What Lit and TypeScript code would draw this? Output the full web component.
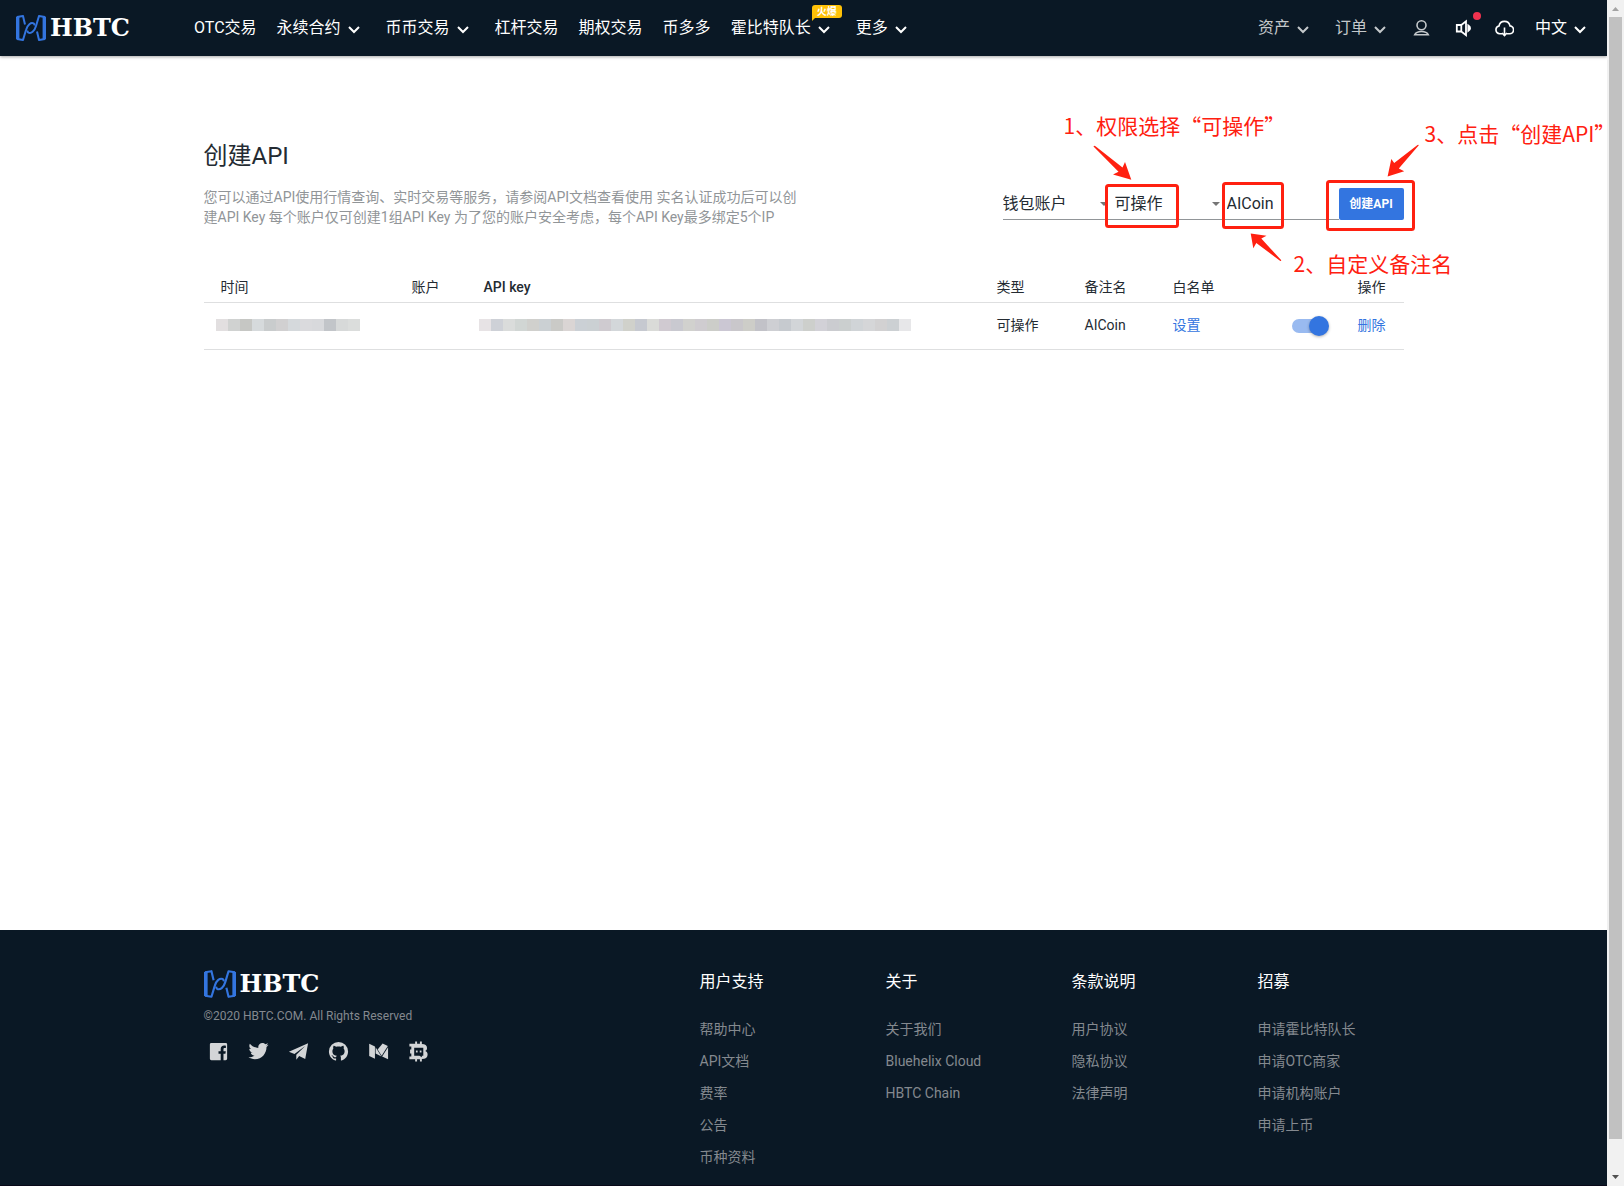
import { LitElement, html, css, svg, nothing } from "lit";
import { customElement, property, state } from "lit/decorators.js";

const FONT = css`Roboto, "Noto Sans CJK SC", "Liberation Sans", sans-serif`;

interface NavItem {
  label: string;
  menu?: boolean;
  badge?: string;
}

const NAV: NavItem[] = [
  { label: "OTC交易" },
  { label: "永续合约", menu: true },
  { label: "币币交易", menu: true },
  { label: "杠杆交易" },
  { label: "期权交易" },
  { label: "币多多" },
  { label: "霍比特队长", menu: true, badge: "火爆" },
  { label: "更多", menu: true },
];

const FOOTER_COLUMNS = [
  { title: "用户支持", links: ["帮助中心", "API文档", "费率", "公告", "币种资料"] },
  { title: "关于", links: ["关于我们", "Bluehelix Cloud", "HBTC Chain"] },
  { title: "条款说明", links: ["用户协议", "隐私协议", "法律声明"] },
  { title: "招募", links: ["申请霍比特队长", "申请OTC商家", "申请机构账户", "申请上币"] },
];

const TIME_BLOCKS =
  "e2dfe0 d0d2d1 c6c7c4 d6dadc c9cccd d1d0d1 d5d9dc dadadd d8d9dc c2c5c9 d7d9d9 dbdddc".split(" ");
const KEY_BLOCKS = (
  "e7e3e5 ced1d7 dadcdb d1d6d4 d0d0cd cbd0d3 cacac7 dad5d4 cbd0d5 cbd0d3 cfcbd0 d3d7da " +
  "d0d1cb c6c9d0 dadbd8 d0cad1 c9c9d0 d1d1ce cfccd0 cccdc9 cbc7d3 c9c7cb cdcdc8 c2c2c8 " +
  "cecfd3 c6cacf d2d5d8 cdcfcc d2d1d7 cbccd0 cbcfcf d0d4d7 d5d6d8 d2d1d2 ccd0d3 e7e7e9"
).split(" ");

const SOCIAL = [
  {
    name: "Facebook",
    shape: svg`<path d="M4.500 3h15A1.500 1.500 0 0 1 21 4.500v15a1.500 1.500 0 0 1-1.500 1.500H17.200v-6.600h2l.4-2.700h-2.400V9.700c0-.9.3-1.400 1.400-1.400h1.100V5.900c-.5-.1-1.100-.1-1.800-.1-2.200 0-3.600 1.300-3.600 3.600v2.300H12v2.700h2.300V21H4.500A1.500 1.500 0 0 1 3 19.500v-15A1.500 1.500 0 0 1 4.500 3z"/>`,
  },
  {
    name: "Twitter",
    shape: svg`<path d="M22.46,6C21.69,6.35 20.86,6.58 20,6.69C20.88,6.16 21.56,5.32 21.88,4.31C21.05,4.81 20.13,5.16 19.16,5.36C18.37,4.5 17.26,4 16,4C13.65,4 11.73,5.92 11.73,8.29C11.73,8.63 11.77,8.96 11.84,9.27C8.28,9.09 5.11,7.38 3,4.79C2.63,5.42 2.42,6.16 2.42,6.94C2.42,8.43 3.17,9.75 4.33,10.5C3.62,10.5 2.96,10.3 2.38,10V10.03C2.38,12.11 3.86,13.85 5.82,14.24C5.46,14.34 5.08,14.39 4.69,14.39C4.42,14.39 4.15,14.36 3.89,14.31C4.43,16 6,17.26 7.89,17.29C6.43,18.45 4.58,19.13 2.56,19.13C2.22,19.13 1.88,19.11 1.54,19.07C3.44,20.29 5.7,21 8.12,21C16,21 20.33,14.46 20.33,8.79C20.33,8.6 20.33,8.42 20.32,8.23C21.16,7.63 21.88,6.87 22.46,6Z" transform="translate(0 -1)"/>`,
  },
  {
    name: "Telegram",
    shape: svg`<path d="M22 3.500L2 12.300l5.800 2.200L19 6.200l-9.300 9.200v5.300l3-3.900 6.300 2.900z"/>`,
  },
  {
    name: "GitHub",
    shape: svg`<path d="M12,2A10,10 0 0,0 2,12C2,16.42 4.87,20.17 8.84,21.5C9.34,21.58 9.5,21.27 9.5,21C9.5,20.77 9.5,20.14 9.5,19.31C6.73,19.91 6.14,17.97 6.14,17.97C5.68,16.81 5.03,16.5 5.03,16.5C4.12,15.88 5.1,15.9 5.1,15.9C6.1,15.97 6.63,16.93 6.63,16.93C7.5,18.45 8.97,18 9.54,17.76C9.63,17.11 9.89,16.67 10.17,16.42C7.95,16.17 5.62,15.31 5.62,11.5C5.62,10.39 6,9.5 6.65,8.79C6.55,8.54 6.2,7.5 6.75,6.15C6.75,6.15 7.59,5.88 9.5,7.17C10.29,6.95 11.15,6.84 12,6.84C12.85,6.84 13.71,6.95 14.5,7.17C16.41,5.88 17.25,6.15 17.25,6.15C17.8,7.5 17.45,8.54 17.35,8.79C18,9.5 18.38,10.39 18.38,11.5C18.38,15.32 16.04,16.16 13.81,16.41C14.17,16.72 14.5,17.33 14.5,18.26C14.5,19.6 14.5,20.68 14.5,21C14.5,21.27 14.66,21.59 15.17,21.5C19.14,20.16 22,16.42 22,12A10,10 0 0,0 12,2Z"/>`,
  },
  {
    name: "Medium",
    shape: svg`<path d="M2.300 3.800l6 3v12.800l-6-3z"/><path d="M9 7.600l6 9.600-6-3z"/><path d="M16.300 3.600l5.400 2.700-6.400 10.200-4.200-6.700z"/><path d="M22 7.600v12.600l-6.200-3z"/>`,
  },
  {
    name: "BiHu",
    shape: svg`<path fill-rule="evenodd" d="M8.500 1.500h2v2.500h3V1.500h2v2.700c3.400.1 5.400 1.500 5.400 4.200 0 1.600-.7 2.700-1.900 3.200 1.600.6 2.500 1.800 2.500 3.700 0 2.900-2.200 4.400-6 4.500v2.700h-2v-2.500h-3v2.500h-2v-2.500H2.500v-2.800h2V14H3.200v-4h1.300V6.800h-2V4h6zM7.500 8v8.500h5.500l2.500 1.500v-1.500H17V8z"/><rect x="9.300" y="11" width="1.800" height="2"/><rect x="13.300" y="11" width="1.800" height="2"/>`,
  },
];

@customElement("hbtc-logo")
export class HbtcLogo extends LitElement {
  static styles = css`
    :host {
      display: flex;
      align-items: center;
      gap: 4px;
      color: #fff;
    }
    .mark {
      flex: none;
      width: 30px;
      height: 26px;
    }
    .word {
      font: bold 24px/28px "DejaVu Serif", serif;
    }
    :host([large]) .mark {
      width: 32px;
      height: 28px;
    }
  `;

  render() {
    return html`
      <svg class="mark" viewBox="0 0 30 26" aria-hidden="true">
        <g fill="none" stroke="#3375e0" stroke-width="2" stroke-linejoin="round">
          <path d="M1 24L7 25L10 15C11.500 9.500 15 7.200 17.600 8.400Q18.600 9 18.400 10.500" />
          <path d="M29 2L23 1L20 11C18.500 16.500 15 18.800 12.400 17.600Q11.400 17 11.600 15.500" />
          <path d="M1 2L7 1L9 9.500" />
          <path d="M29 24L23 25L21 16.500" />
        </g>
        <path fill="#3375e0" d="M0 1.800L3.400 1V25L0 24.200zM30 1.800L26.600 1V25L30 24.200z" />
      </svg>
      <span class="word">HBTC</span>
    `;
  }
}

@customElement("site-header")
export class SiteHeader extends LitElement {
  static styles = css`
    :host {
      display: block;
      font-family: ${FONT};
    }
    .bar {
      display: flex;
      align-items: center;
      height: 56px;
      padding: 0 5px 0 16px;
      background: #0a1825;
      box-shadow: 0 1px 3px rgba(0, 0, 0, 0.35);
    }
    .home {
      flex: none;
      width: 168px;
      text-decoration: none;
    }
    .menu,
    .tools {
      display: flex;
      align-items: center;
    }
    .tools {
      margin-left: auto;
    }
    .item {
      position: relative;
      display: flex;
      align-items: center;
      padding: 0 10px;
      color: #fff;
      font-size: 16px;
      line-height: 24px;
      white-space: nowrap;
      text-decoration: none;
    }
    .dim {
      color: #c4c8cb;
    }
    .chevron {
      width: 24px;
      height: 24px;
      margin-left: 1px;
      flex: none;
    }
    .badge {
      position: absolute;
      top: -11px;
      right: 4px;
      width: 30px;
      border-radius: 3px 3px 3px 0;
      background: #ffc107;
      font-size: 10px;
      font-weight: 700;
      line-height: 13px;
      text-align: center;
    }
    .badge::after {
      content: "";
      position: absolute;
      left: 0;
      top: 100%;
      border-top: 3px solid #ffc107;
      border-right: 3px solid transparent;
    }
    .icons {
      display: flex;
    }
    .icon {
      position: relative;
      display: flex;
      justify-content: center;
      width: 41px;
      padding: 0;
      border: 0;
      background: none;
      color: #fff;
    }
    .icon.dim {
      color: #c4c8cb;
    }
    .glyph {
      width: 20px;
      height: 20px;
    }
    .dot {
      position: absolute;
      top: -6px;
      left: 30px;
      width: 8px;
      height: 8px;
      border-radius: 50%;
      background: #f0324f;
    }
  `;

  private chevron() {
    return html`<svg class="chevron" viewBox="0 0 24 24" aria-hidden="true">
      <path d="M7 11l5 5 5-5" fill="none" stroke="currentColor" stroke-width="2" />
    </svg>`;
  }

  private item(item: NavItem, dim = false) {
    return html`<a class="item ${dim ? "dim" : ""}" href="#">
      <span>${item.label}</span>${item.menu ? this.chevron() : nothing}
      ${item.badge ? html`<span class="badge">${item.badge}</span>` : nothing}
    </a>`;
  }

  render() {
    return html`
      <header class="bar">
        <a class="home" href="#" aria-label="HBTC"><hbtc-logo></hbtc-logo></a>
        <nav class="menu">${NAV.map((n) => this.item(n))}</nav>
        <div class="tools">
          ${this.item({ label: "资产", menu: true }, true)}
          ${this.item({ label: "订单", menu: true }, true)}
          <div class="icons">
            <button class="icon dim" aria-label="个人中心">
              <svg class="glyph" viewBox="0 0 20 20" fill="none" stroke="currentColor" stroke-width="1.600">
                <circle cx="9.500" cy="7.200" r="4.500" />
                <path d="M2.700 16.800c1.200-2.600 3.400-3.300 6.800-3.300s5.600.7 6.800 3.300z" />
              </svg>
            </button>
            <button class="icon" aria-label="公告">
              <svg class="glyph" viewBox="0 0 20 20" fill="none" stroke="currentColor" stroke-width="1.800">
                <path d="M3.800 7h4.500v6.500H3.800zM8.300 7L13 3.300v13.900l-4.700-3.700" />
                <path d="M15.300 7.600q3.600 2.600 0 5.300z" />
              </svg>
              <span class="dot"></span>
            </button>
            <button class="icon" aria-label="下载">
              <svg class="glyph" viewBox="0 0 20 20" fill="none" stroke="currentColor" stroke-width="1.600">
                <path d="M8 15.700H5.700A3.900 3.900 0 0 1 5 8a5.600 5.600 0 0 1 11-.1 3.900 3.900 0 0 1-.7 7.800H13" />
                <path d="M10.500 9.500v8M8 15l2.500 2.600L13 15" />
              </svg>
            </button>
          </div>
          ${this.item({ label: "中文", menu: true })}
        </div>
      </header>
    `;
  }
}

@customElement("mosaic-strip")
export class MosaicStrip extends LitElement {
  @property({ attribute: false }) blocks: string[] = [];

  static styles = css`
    :host {
      display: flex;
      height: 12px;
    }
    .block {
      flex: none;
      width: 12px;
    }
  `;

  render() {
    return this.blocks.map((c) => html`<span class="block" style="background:#${c}"></span>`);
  }
}

@customElement("api-panel")
export class ApiPanel extends LitElement {
  @state() private enabled = true;

  static styles = css`
    :host {
      display: block;
      font-family: ${FONT};
      color: #242b32;
    }
    .panel {
      position: relative;
      max-width: 1200px;
      margin: 0 auto;
      padding-top: 84px;
    }
    .top {
      display: flex;
      align-items: flex-end;
      justify-content: space-between;
      margin-bottom: 45px;
    }
    .intro {
      flex: 0 1 600px;
    }
    .title {
      margin: 0 0 15px;
      font-size: 24px;
      font-weight: 400;
      line-height: 32px;
    }
    .desc {
      margin: 0;
      color: #919598;
      font-size: 14px;
      line-height: 20px;
    }
    .form {
      display: flex;
      flex: none;
      margin-bottom: 7px;
    }
    .field {
      display: grid;
      align-items: center;
      width: 112px;
      height: 32px;
      box-sizing: border-box;
      border-bottom: 1px solid #919598;
    }
    .control {
      grid-area: 1 / 1;
      width: 100%;
      height: 30px;
      margin: 0;
      padding: 0;
      border: 0;
      outline: 0;
      appearance: none;
      background: none;
      color: inherit;
      font: 16px/30px ${FONT};
    }
    .caret {
      grid-area: 1 / 1;
      justify-self: end;
      width: 8px;
      height: 4px;
      margin-right: 7px;
      pointer-events: none;
    }
    .create {
      width: 65px;
      height: 32px;
      padding: 0;
      border: 0;
      border-radius: 2px;
      background: #3375e0;
      color: #fff;
      font: 700 12px/32px ${FONT};
    }
    .table {
      width: 100%;
      border-collapse: separate;
      border-spacing: 0;
      table-layout: fixed;
      font-size: 14px;
      line-height: 20px;
      text-align: left;
    }
    .time { width: 191px; }
    .account { width: 72px; }
    .key { width: 513px; }
    .kind { width: 88px; }
    .white { width: 119px; }
    .switch { width: 66px; }
    .action { width: 63px; }
    .th {
      box-sizing: border-box;
      padding: 5px 0 5px 17px;
      border-bottom: 1px solid #dedfe0;
      font-weight: 400;
      white-space: nowrap;
    }
    .th.key {
      font-weight: 500;
    }
    .td {
      padding: 12px 0 14px 17px;
      border-bottom: 1px solid #dedfe0;
      white-space: nowrap;
    }
    .td.masked {
      padding-left: 12px;
    }
    .link {
      color: #3375e0;
      text-decoration: none;
    }
    .toggle {
      display: flex;
      align-items: center;
      justify-content: flex-end;
      width: 34px;
      height: 14px;
      margin: 2px 0 0;
      border-radius: 7px;
      appearance: none;
      background: #99baf0;
    }
    .toggle::after {
      content: "";
      flex: none;
      width: 20px;
      height: 20px;
      margin-right: -3px;
      border-radius: 50%;
      background: #3375e0;
      box-shadow: 0 1px 3px rgba(0, 0, 0, 0.3);
    }
    .toggle:not(:checked) {
      justify-content: flex-start;
      background: #b5b9bd;
    }
    .notes {
      position: absolute;
      top: 0;
      right: 0;
      width: 360px;
      height: 240px;
      pointer-events: none;
      color: #ff2010;
      font: 21px/28px "Noto Sans CJK SC", sans-serif;
    }
    .marks {
      display: block;
      width: 360px;
      height: 240px;
      overflow: visible;
    }
    .note {
      position: absolute;
      white-space: nowrap;
    }
    .one {
      left: 20px;
      top: 55px;
    }
    .two {
      left: 250px;
      top: 193px;
    }
    .three {
      left: 381px;
      top: 63px;
    }
  `;

  private caret() {
    return html`<svg class="caret" viewBox="0 0 10 5" aria-hidden="true">
      <path d="M0 0h10L5 5z" fill="#757575" />
    </svg>`;
  }

  render() {
    return html`
      <main class="panel">
        <section class="top">
          <div class="intro">
            <h1 class="title">创建API</h1>
            <p class="desc">
              您可以通过API使用行情查询、实时交易等服务，请参阅API文档查看使用 实名认证成功后可以创建API Key
              每个账户仅可创建1组API Key 为了您的账户安全考虑，每个API Key最多绑定5个IP
            </p>
          </div>
          <form class="form" @submit=${(e: Event) => e.preventDefault()}>
            <label class="field">
              <select class="control" aria-label="账户">
                <option>钱包账户</option>
              </select>
              ${this.caret()}
            </label>
            <label class="field">
              <select class="control" aria-label="类型">
                <option>可操作</option>
              </select>
              ${this.caret()}
            </label>
            <label class="field">
              <input class="control" type="text" aria-label="备注名" value="AICoin" />
            </label>
            <button class="create" type="submit">创建API</button>
          </form>
        </section>

        <table class="table">
          <thead>
            <tr>
              <th class="th time">时间</th>
              <th class="th account">账户</th>
              <th class="th key">API key</th>
              <th class="th kind">类型</th>
              <th class="th kind">备注名</th>
              <th class="th white">白名单</th>
              <th class="th switch"></th>
              <th class="th action">操作</th>
            </tr>
          </thead>
          <tbody>
            <tr>
              <td class="td masked"><mosaic-strip .blocks=${TIME_BLOCKS}></mosaic-strip></td>
              <td class="td"></td>
              <td class="td masked"><mosaic-strip .blocks=${KEY_BLOCKS}></mosaic-strip></td>
              <td class="td">可操作</td>
              <td class="td">AICoin</td>
              <td class="td"><a class="link" href="#">设置</a></td>
              <td class="td">
                <input
                  class="toggle"
                  type="checkbox"
                  aria-label="启用"
                  .checked=${this.enabled}
                  @change=${() => (this.enabled = !this.enabled)}
                />
              </td>
              <td class="td"><a class="link" href="#">删除</a></td>
            </tr>
          </tbody>
        </table>

        <div class="notes">
          <svg class="marks" viewBox="1044 56 360 240" aria-hidden="true">
            <g fill="none" stroke="#ff2010" stroke-width="3">
              <rect x="1106.500" y="185.500" width="71" height="41" rx="2" />
              <rect x="1223.500" y="183.500" width="59" height="44" rx="2" />
              <rect x="1327.500" y="181.500" width="86" height="48" rx="2" />
            </g>
            <g fill="#ff2010">
              <path d="M1093.500 146.500Q1094 145.300 1095.500 146.200L1122.500 167.500 1125 162 1131.300 179.800 1113 174.400 1118.500 171.800z" />
              <path d="M1250.700 233.600L1266.500 235.700 1261.300 238.500 1281.300 260.300Q1281 261.500 1280 260.800L1256.300 243 1253.300 248.200z" />
              <path d="M1418.800 145.200Q1418.500 144.400 1417.500 145L1394.200 163 1391.300 159 1387.600 176.500 1404.200 171.200 1398.800 168.600z" />
            </g>
          </svg>
          <span class="note one">1、权限选择“可操作”</span>
          <span class="note two">2、自定义备注名</span>
          <span class="note three">3、点击“创建API”</span>
        </div>
      </main>
    `;
  }
}

@customElement("site-footer")
export class SiteFooter extends LitElement {
  static styles = css`
    :host {
      display: block;
      background: #0a1825;
      border-bottom: 1px solid #080818;
      font-family: ${FONT};
      color: #84898f;
    }
    .inner {
      display: flex;
      justify-content: space-between;
      max-width: 1200px;
      margin: 0 auto;
      padding: 40px 0 12px;
    }
    .copy {
      margin: 8px 0 14px;
      font-size: 12px;
      line-height: 20px;
    }
    .social {
      display: flex;
      margin-left: -5px;
    }
    .badge {
      display: flex;
      justify-content: center;
      width: 40px;
      color: #d3d5d7;
    }
    .glyph {
      width: 23px;
      height: 23px;
    }
    .columns {
      display: grid;
      grid-template-columns: repeat(4, 186px);
      margin-right: -40px;
    }
    .heading {
      margin: 0 0 19px;
      color: #fff;
      font-size: 16px;
      font-weight: 400;
      line-height: 24px;
    }
    .links {
      margin: 0;
      padding: 0;
      list-style: none;
      font-size: 14px;
      line-height: 32px;
    }
    .link {
      color: inherit;
      text-decoration: none;
    }
  `;

  render() {
    return html`
      <footer class="inner">
        <div>
          <hbtc-logo large></hbtc-logo>
          <p class="copy">©2020 HBTC.COM. All Rights Reserved</p>
          <div class="social">
            ${SOCIAL.map(
              (s) => html`<a class="badge" href="#" aria-label=${s.name}>
                <svg class="glyph" viewBox="0 0 24 24" fill="currentColor" aria-hidden="true">${s.shape}</svg>
              </a>`,
            )}
          </div>
        </div>
        <nav class="columns">
          ${FOOTER_COLUMNS.map(
            (col) => html`<section>
              <h2 class="heading">${col.title}</h2>
              <ul class="links">
                ${col.links.map((l) => html`<li><a class="link" href="#">${l}</a></li>`)}
              </ul>
            </section>`,
          )}
        </nav>
      </footer>
    `;
  }
}

@customElement("app-root")
export class AppRoot extends LitElement {
  static styles = css`
    :host {
      display: grid;
      grid-template-columns: minmax(0, 1fr) 17px;
      min-height: 100vh;
      background: #fff;
    }
    .page {
      display: flex;
      flex-direction: column;
    }
    .content {
      flex: 1;
    }
    .scrollbar {
      display: flex;
      flex-direction: column;
      background: #f1f1f1;
    }
    .arrow {
      flex: none;
      width: 17px;
      height: 17px;
    }
    .thumb {
      flex: 1122;
      margin: 0 2px;
      background: #c1c1c1;
    }
    .rest {
      flex: 30;
    }
  `;

  render() {
    return html`
      <div class="page">
        <site-header></site-header>
        <api-panel class="content"></api-panel>
        <site-footer></site-footer>
      </div>
      <div class="scrollbar" aria-hidden="true">
        <svg class="arrow" viewBox="0 0 17 17"><path d="M5 11h7L8.500 7z" fill="#a3a3a3" /></svg>
        <div class="thumb"></div>
        <div class="rest"></div>
        <svg class="arrow" viewBox="0 0 17 17"><path d="M5 6h7l-3.500 4z" fill="#505050" /></svg>
      </div>
    `;
  }
}
